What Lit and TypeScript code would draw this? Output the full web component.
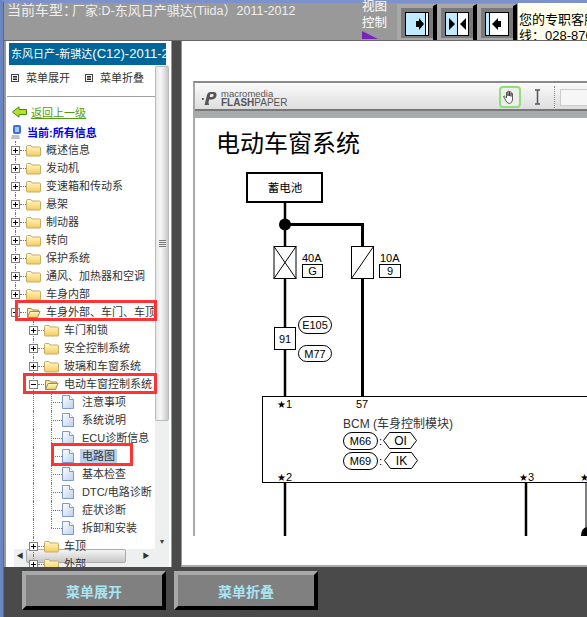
import { LitElement, html, css, svg } from "lit";
import { customElement } from "lit/decorators.js";
import { classMap } from "lit/directives/class-map.js";

type Row = { label: string; level: number; kind: "plus" | "minus" | "page"; open?: boolean; sel?: boolean; last?: boolean; endLine?: boolean };

const rows: Row[] = [
  { label: "概述信息", level: 0, kind: "plus" },
  { label: "发动机", level: 0, kind: "plus" },
  { label: "变速箱和传动系", level: 0, kind: "plus" },
  { label: "悬架", level: 0, kind: "plus" },
  { label: "制动器", level: 0, kind: "plus" },
  { label: "转向", level: 0, kind: "plus" },
  { label: "保护系统", level: 0, kind: "plus" },
  { label: "通风、加热器和空调", level: 0, kind: "plus" },
  { label: "车身内部", level: 0, kind: "plus" },
  { label: "车身外部、车门、车顶", level: 0, kind: "minus", open: true, endLine: true },
  { label: "车门和锁", level: 1, kind: "plus" },
  { label: "安全控制系统", level: 1, kind: "plus" },
  { label: "玻璃和车窗系统", level: 1, kind: "plus" },
  { label: "电动车窗控制系统", level: 1, kind: "minus", open: true },
  { label: "注意事项", level: 2, kind: "page" },
  { label: "系统说明", level: 2, kind: "page" },
  { label: "ECU诊断信息", level: 2, kind: "page" },
  { label: "电路图", level: 2, kind: "page", sel: true },
  { label: "基本检查", level: 2, kind: "page" },
  { label: "DTC/电路诊断", level: 2, kind: "page" },
  { label: "症状诊断", level: 2, kind: "page" },
  { label: "拆卸和安装", level: 2, kind: "page", last: true },
  { label: "车顶", level: 1, kind: "plus" },
  { label: "外部", level: 1, kind: "plus" },
];

const mix = (t: string) =>
  t.split(/([\x00-\x7f]+)/).map((p) => (/^[\x00-\x7f]+$/.test(p) ? html`<span class="lat">${p}</span>` : p));

const folder = (open?: boolean) => html`<svg class="ficon" width="15" height="14" viewBox="0 0 15 14">
  <defs><linearGradient id="fg" x1="0" y1="0" x2="0" y2="1"><stop offset="0" stop-color="#fffad0"/><stop offset="1" stop-color="#f4cc58"/></linearGradient></defs>
  ${open
    ? svg`<path d="M1.500 12.500V3.500h4l1 1.500h6v2" fill="#f8e8a8" stroke="#a08a50"/><path d="M1.500 12.500l2.500-6h10l-2.500 6z" fill="url(#fg)" stroke="#a08a50"/>`
    : svg`<path d="M.5 12V3.500q0-1 1-1h3.500l1 1.500h7.500q1 0 1 1V12q0 1-1 1H1.500q-1 0-1-1z" fill="url(#fg)" stroke="#c9ab62"/>`}
</svg>`;

const page = html`<svg class="ficon" width="12" height="14" viewBox="0 0 12 14">
  <defs><linearGradient id="pg" x1="0" y1="0" x2="1" y2="1"><stop offset="0" stop-color="#fff"/><stop offset="1" stop-color="#bcd0f0"/></linearGradient></defs>
  <path d="M.5.5h7l4 4v9H.5z" fill="url(#pg)" stroke="#7f9ac8"/><path d="M7.500.5v4h4" fill="#fff" stroke="#7f9ac8"/>
</svg>`;

const expander = (minus: boolean, end: boolean) => html`<span class="${classMap({ exp: true, end })}">
  <svg width="9" height="9" viewBox="0 0 9 9"><rect x=".5" y=".5" width="8" height="8" fill="#fff" stroke="#808080"/><path d="M2 4.500h5${minus ? "" : "M4.500 2v5"}" stroke="#000" fill="none"/></svg>
</span>`;

const menuIcon = html`<svg class="micon" width="8" height="8" viewBox="0 0 8 8"><rect x=".5" y=".5" width="7" height="7" fill="#fff" stroke="#444"/><path d="M2 2.500h4M2 4h4M2 5.500h4" stroke="#222"/></svg>`;

@customElement("app-root")
export class AppRoot extends LitElement {
  static styles = css`
    :host { display: block; width: 587px; height: 617px; overflow: hidden; font-family: "Liberation Sans", "Noto Sans CJK SC", sans-serif; background: #4a4a4a; }
    .app { position: relative; display: flex; flex-direction: column; height: 617px; border-left: 3px solid #6c86c4; box-sizing: border-box; }
    .head { height: 40px; background: #999; display: flex; border-top: 3px solid #7d92cc; box-sizing: border-box; border-left: 1px solid #666; flex: none; }
    .htitle { flex: none; width: 358px; padding: 0 0 0 3px; box-sizing: border-box; color: #eee; font-size: 13px; line-height: 15px; white-space: nowrap; }
    .hfirst { font-size: 14px; margin-right: -5px; }
    .htitle .lat { font-size: 12.5px; }
    .view { width: 35px; flex: none; color: #fff; font-size: 12.5px; line-height: 15.5px; margin-top: -3px; }
    .view-t { display: block; width: 16px; height: 8px; }
    .vbtns { display: flex; width: 121px; flex: none; margin-top: 1px; }
    .vb { display: block; flex: none; }
    .info { flex: 1; background: #ffffee; color: #000; font-size: 13px; line-height: 16px; white-space: nowrap; overflow: hidden; padding: 9px 0 0 1px; }
    .main { display: flex; flex: none; height: 527px; border-left: 1px solid #666; border-top: 1px solid #666; box-sizing: border-box; background: #999; }
    .side { position: relative; width: 165px; flex: none; margin-left: 2px; background: #fff; overflow: hidden; box-sizing: border-box; border-right: 2px solid #fff; }
    .stitle { margin: 2px 0 0 3px; width: 157px; height: 22px; background: #006699; color: #fff; font-size: 11px; line-height: 21px; white-space: nowrap; overflow: hidden; padding-left: 2px; box-sizing: border-box; position: relative; z-index: 3; }
    .stitle .lat { font-size: 13px; }
    .left { width: 149px; }
    .mrow { height: 32px; display: flex; align-items: center; font-size: 11px; line-height: 16px; color: #333; padding: 4px 0 10px 4px; box-sizing: border-box; border-bottom: 1px solid #a0a0a0; margin-left: 1px; }
    .mrow span { width: 59px; white-space: nowrap; flex: none; }
    .micon { margin-right: 7px; flex: none; }
    .back { height: 22px; margin-top: 4px; display: flex; align-items: center; padding-left: 6px; gap: 4px; font-size: 11px; color: #4f9c10; text-decoration: underline; }
    .cur { height: 18px; display: flex; align-items: center; padding-left: 5px; gap: 5px; font-size: 11px; font-weight: 700; color: #0000ee; }
    .tree { position: relative; z-index: 2; font-size: 11px; color: #333; white-space: nowrap; width: 149px; overflow: hidden; height: 430px; }
    .row { display: flex; height: 18px; align-items: center; }
    .cell { width: 18px; height: 18px; flex: none; box-sizing: border-box; position: relative; }
    .cell.v::before { content: ""; position: absolute; left: 9px; top: 0; bottom: 0; border-left: 1px dotted #777; }
    .cell.half::before { bottom: 9px; }
    .cell.h::after { content: ""; position: absolute; left: 9px; width: 11px; top: 9px; border-top: 1px dotted #777; }
    .exp { width: 18px; height: 18px; flex: none; display: flex; align-items: center; justify-content: center; position: relative; }
    .exp::before { content: ""; position: absolute; left: 9px; top: 0; bottom: 0; border-left: 1px dotted #777; }
    .exp.end::before { bottom: 9px; }
    .exp::after { content: ""; position: absolute; left: 14px; width: 6px; top: 9px; border-top: 1px dotted #777; }
    .exp svg { position: relative; z-index: 1; }
    .ficon { flex: none; margin-left: 2px; margin-right: 5px; position: relative; }
    .page .ficon { margin-right: 8px; }
    .lbl { line-height: 15px; }
    .sel { background: #bcd0ec; padding: 0 2px; margin-left: -2px; }
    .vscroll { position: absolute; left: 149px; top: 24px; width: 14px; bottom: 18px; background: #eef0f0; z-index: 1; display: flex; flex-direction: column; }
    .thumb { margin-top: 1px; height: 355px; background: linear-gradient(90deg, #e8e8e8, #f8f8f8 40%, #c8c8c8); border: 1px solid #bbb; border-radius: 2px; display: flex; align-items: center; justify-content: center; box-sizing: border-box; }
    .grip { width: 7px; height: 8px; background: repeating-linear-gradient(#777 0 1px, #eee 1px 2px); }
    .varrow { margin-top: auto; height: 14px; text-align: center; font-size: 7px; line-height: 14px; color: #444; }
    .hscroll { position: absolute; left: 8px; right: 0; bottom: 0; height: 18px; background: #eef0f0; z-index: 1; display: flex; align-items: flex-start; }
    .harrow { width: 12px; text-align: center; font-size: 7px; color: #333; line-height: 14px; flex: none; }
    .hthumb { width: 100px; height: 14px; background: linear-gradient(#f4f4f4, #c8c8c8); border: 1px solid #aaa; box-sizing: border-box; border-radius: 2px; flex: none; }
    .hspace { width: 14px; flex: none; }
    .divider { width: 9px; flex: none; background: #4a4a4a; margin-left: 1px; }
    .doc { flex: 1; background: #fff; margin-left: 1px; min-width: 0; padding: 40px 0 0 11px; border-bottom: 2px solid #aaa; box-sizing: border-box; overflow: hidden; }
    .frame { width: 400px; border-left: 2px solid #a8a8a8; border-top: 2px solid #8a8a8a; box-sizing: border-box; height: 455px; }
    .tb { height: 28px; background: linear-gradient(#fafafa, #dedede); display: flex; align-items: center; padding: 2px 0 0 7px; box-sizing: border-box; border-bottom: 2px solid #777; }
    .logo { display: flex; gap: 4px; align-items: center; width: 297px; color: #555; flex: none; padding-top: 2px; box-sizing: border-box; }
    .lt { font-size: 9.5px; line-height: 9px; }
    .lt b { display: block; font-size: 10px; line-height: 10px; }
    .lt b i { font-style: normal; font-weight: 400; }
    .hand { width: 22px; height: 22px; border: 2px solid #8fe078; border-radius: 4px; box-sizing: border-box; background: #eee; display: flex; align-items: center; justify-content: center; flex: none; }
    .ibeam { margin-left: 13px; flex: none; }
    .dots { height: 22px; border-left: 1px dotted #888; margin-left: 13px; flex: none; }
    .input { width: 40px; height: 17px; margin-left: 5px; background: #f6f6f6; border: 1px solid #ccc; box-sizing: border-box; flex: none; }
    .band { height: 7px; background: #a5acab; }
    .diagram { display: block; }
    .foot { flex: none; height: 50px; background: #4a4a4a; display: flex; gap: 8px; padding: 4px 0 0 18px; box-sizing: border-box; border-left: 1px solid #666; }
    .fbtn { width: 144px; height: 39px; background: #808080; color: #a9e4f2; font-size: 14px; font-weight: 700; display: flex; align-items: center; justify-content: center; box-sizing: border-box; border: 4px solid; border-color: #a8a8a8 #000 #000 #a8a8a8; font-family: "Noto Sans CJK SC", sans-serif; }
    .red { position: absolute; border: 3px solid #ff3333; box-sizing: border-box; z-index: 5; pointer-events: none; }
    .r1 { left: 12px; top: 300px; width: 142px; height: 21px; }
    .r2 { left: 20px; top: 373px; width: 134px; height: 21px; }
    .r3 { left: 48px; top: 443px; width: 82px; height: 23px; }
    svg text { font-family: "Liberation Sans", "Noto Sans CJK SC", sans-serif; }
  `;

  private vb(kind: number) {
    return html`<svg class="vb" width="40" height="36" viewBox="0 0 40 36">
      <rect width="40" height="36" fill="#a8a8a8"/>
      <rect x="4" y="4" width="32" height="30" fill="#7a7a7a"/>
      <path d="M36 2l4-2V36H36z" fill="#000"/>
      <rect x="8.500" y="8.500" width="23" height="23" fill="#fff" stroke="#000"/>
      ${kind === 0
        ? svg`<rect x="9" y="9" width="19" height="22" fill="#bfeaff"/><path d="M28.500 9v22" stroke="#000"/><path d="M19 17h3v-3l5 6-5 6v-3h-3z" fill="#000"/>`
        : kind === 1
          ? svg`<rect x="9" y="9" width="11" height="22" fill="#bfeaff"/><path d="M20.500 9v22" stroke="#000"/><path d="M12 14l6 6-6 6zM29 14l-6 6 6 6z" fill="#000"/>`
          : svg`<rect x="9" y="9" width="3" height="22" fill="#bfeaff"/><path d="M12.500 9v22" stroke="#000"/><path d="M24 17h-3v-3l-6 6 6 6v-3h3z" fill="#000"/>`}
    </svg>`;
  }

  private treeRow(r: Row) {
    const cells = [];
    if (r.level >= 1) cells.push(html`<span class="cell"></span>`);
    if (r.level === 2) {
      cells.push(html`<span class="cell v"></span>`);
      cells.push(html`<span class="${classMap({ cell: true, v: true, h: true, half: !!r.last })}"></span>`);
    }
    return html`<div class="${classMap({ row: true, page: r.kind === "page" })}">
      ${cells}
      ${r.kind === "page" ? "" : expander(r.kind === "minus", !!r.endLine)}
      ${r.kind === "page" ? page : folder(r.open)}
      <span class="${classMap({ lbl: true, sel: !!r.sel })}">${r.label}</span>
    </div>`;
  }

  private diagram() {
    const pill = (x: number, y: number, w: number, h: number, t: string) => svg`
      <rect x="${x}" y="${y}" width="${w}" height="${h}" rx="${h / 2}" fill="#fff" stroke="#000"/>
      <text x="${x + w / 2}" y="${y + h / 2 + 4}" font-size="11" text-anchor="middle">${t}</text>`;
    const hex = (x: number, y: number, t: string) => svg`
      <path d="M${x} ${y + 8}l6-8h21l6 8-6 8H${x + 6}z" fill="#fff" stroke="#000"/>
      <text x="${x + 17}" y="${y + 12.5}" font-size="12" text-anchor="middle">${t}</text>`;
    const star = (x: number, y: number, t: string) => svg`
      <text x="${x}" y="${y}" font-size="11"><tspan font-size="10" font-family="DejaVu Sans">★</tspan>${t}</text>`;
    return html`<svg class="diagram" width="392" height="418" viewBox="195 118 392 418">
      <rect x="195" y="118" width="392" height="418" fill="#fff"/>
      <text x="216" y="152" font-size="24" fill="#000">电动车窗系统</text>
      <rect x="247" y="173" width="75" height="29" fill="#fff" stroke="#000" stroke-width="2"/>
      <text x="285" y="192" font-size="11.500" text-anchor="middle">蓄电池</text>
      <path d="M285 202V396" stroke="#000" stroke-width="2.500" fill="none"/>
      <path d="M285 224.500H362.500V396" stroke="#000" stroke-width="3" fill="none"/>
      <circle cx="285" cy="224.500" r="6" fill="#000"/>
      <rect x="274" y="246.500" width="22" height="32" fill="#fff" stroke="#000"/>
      <path d="M274 246.500l22 32M296 246.500l-22 32" stroke="#000" fill="none"/>
      <rect x="351.500" y="246.500" width="22" height="32" fill="#fff" stroke="#000"/>
      <path d="M351.500 278.500l22-32" stroke="#000" fill="none"/>
      <text x="302" y="262" font-size="11">40A</text>
      <rect x="302.500" y="264.500" width="20" height="13" fill="#fff" stroke="#000"/>
      <text x="312.500" y="275" font-size="11" text-anchor="middle">G</text>
      <text x="380" y="262" font-size="11">10A</text>
      <rect x="379.500" y="264.500" width="21" height="13" fill="#fff" stroke="#000"/>
      <text x="390" y="275" font-size="11" text-anchor="middle">9</text>
      <rect x="274.500" y="327.500" width="21" height="22" fill="#fff" stroke="#000"/>
      <text x="285" y="343" font-size="11" text-anchor="middle">91</text>
      ${pill(298.5, 316.5, 33, 17, "E105")}
      ${pill(298.5, 345.5, 33, 16, "M77")}
      <rect x="262.500" y="396.500" width="340" height="86" fill="#fff" stroke="#000"/>
      ${star(277, 408, "1")}
      <text x="356" y="408" font-size="11">57</text>
      <text x="343" y="428" font-size="12" fill="#333">BCM (车身控制模块)</text>
      ${pill(343.5, 432.5, 34, 17, "M66")}
      <text x="379" y="445" font-size="11">:</text>
      ${hex(383.5, 432.5, "OI")}
      ${pill(343.5, 452.5, 34, 17, "M69")}
      <text x="379" y="465" font-size="11">:</text>
      ${hex(384.5, 452.5, "IK")}
      ${star(277, 481, "2")}
      ${star(519, 481, "3")}
      ${star(580, 481, "")}
      <path d="M285 483V536M526 483V536" stroke="#000" stroke-width="2.500" fill="none"/>
      <path d="M586 483V536" stroke="#000" fill="none"/>
      <path d="M581 536q0-8 6-9v9z" fill="#000"/>
    </svg>`;
  }

  render() {
    return html`<div class="app">
      <div class="head">
        <div class="htitle"><span class="hfirst">当前车型：</span>${mix("厂家:D-东风日产骐达(Tiida）2011-2012")}</div>
        <div class="view">视图<br />控制
          <svg class="view-t" viewBox="0 0 16 8"><path d="M0 0l16 8H0z" fill="#7a22c0"/></svg>
        </div>
        <div class="vbtns">${this.vb(0)}${this.vb(1)}${this.vb(2)}</div>
        <div class="info">您的专职客服热<br />线：028-8700</div>
      </div>
      <div class="main">
        <div class="side">
          <div class="stitle">${mix("东风日产-新骐达(C12)-2011-2012")}</div>
          <div class="left">
            <div class="mrow">${menuIcon}<span>菜单展开</span>${menuIcon}<span>菜单折叠</span></div>
            <div class="back">
              <svg width="15" height="12" viewBox="0 0 15 12"><path d="M.5 6L7 .8V3.500h7.500v5H7v2.700z" fill="#b8e02a" stroke="#3d8a10"/></svg>
              <span>返回上一级</span>
            </div>
            <div class="cur">
              <svg width="11" height="16" viewBox="0 0 11 16"><rect x="2" y="1" width="8" height="9" rx="2" fill="#3a6fd8"/><rect x="4" y="3" width="4" height="5" fill="#a8c8f8"/><path d="M1 11h7l1 4H0z" fill="#c0c0c8"/></svg>
              <span>当前:所有信息</span>
            </div>
            <div class="tree">${rows.map((r) => this.treeRow(r))}</div>
          </div>
          <div class="vscroll"><div class="thumb"><div class="grip"></div></div><div class="varrow">▼</div></div>
          <div class="hscroll"><span class="harrow">◀</span><div class="hthumb"></div><span class="hspace"></span><span class="harrow">▶</span></div>
        </div>
        <div class="divider"></div>
        <div class="doc">
          <div class="frame">
            <div class="tb">
              <div class="logo">
                <svg width="15" height="15" viewBox="0 0 15 15"><path d="M0 7h2L1.500 9H0zM2.500 14L5 4Q5.600 1 9 1h2.500Q15 1 14.500 4.500T10 8.500H7.200L6.500 11 7 14zM7.800 6h2q1.600 0 1.800-1.500T10.500 3H9q-.7 0-.9.800z" fill="#555" fill-rule="evenodd"/></svg>
                <div class="lt">macromedia<b>FLASH<i>PAPER</i></b></div>
              </div>
              <div class="hand">
                <svg width="16" height="16" viewBox="0 0 16 16"><path d="M3 10L1.500 7.500q.5-1 1.500 0L4.500 9V3.500q1-1 1.500 0V7 2.500q1-1 1.500 0V7 3q1-1 1.500 0v4.500-3q1-1 1.500 0V11q-.5 3-3 3.500H7Q4.500 14 3 10z" fill="#fff" stroke="#333" stroke-width=".8"/></svg>
              </div>
              <svg class="ibeam" width="7" height="16" viewBox="0 0 7 16"><path d="M1 1h5M1 15h5M3.500 1v14" stroke="#556" stroke-width="1.500" fill="none"/></svg>
              <div class="dots"></div>
              <div class="input"></div>
            </div>
            <div class="band"></div>
            ${this.diagram()}
          </div>
        </div>
      </div>
      <div class="foot">
        <div class="fbtn">菜单展开</div>
        <div class="fbtn">菜单折叠</div>
      </div>
      <div class="red r1"></div>
      <div class="red r2"></div>
      <div class="red r3"></div>
    </div>`;
  }
}
